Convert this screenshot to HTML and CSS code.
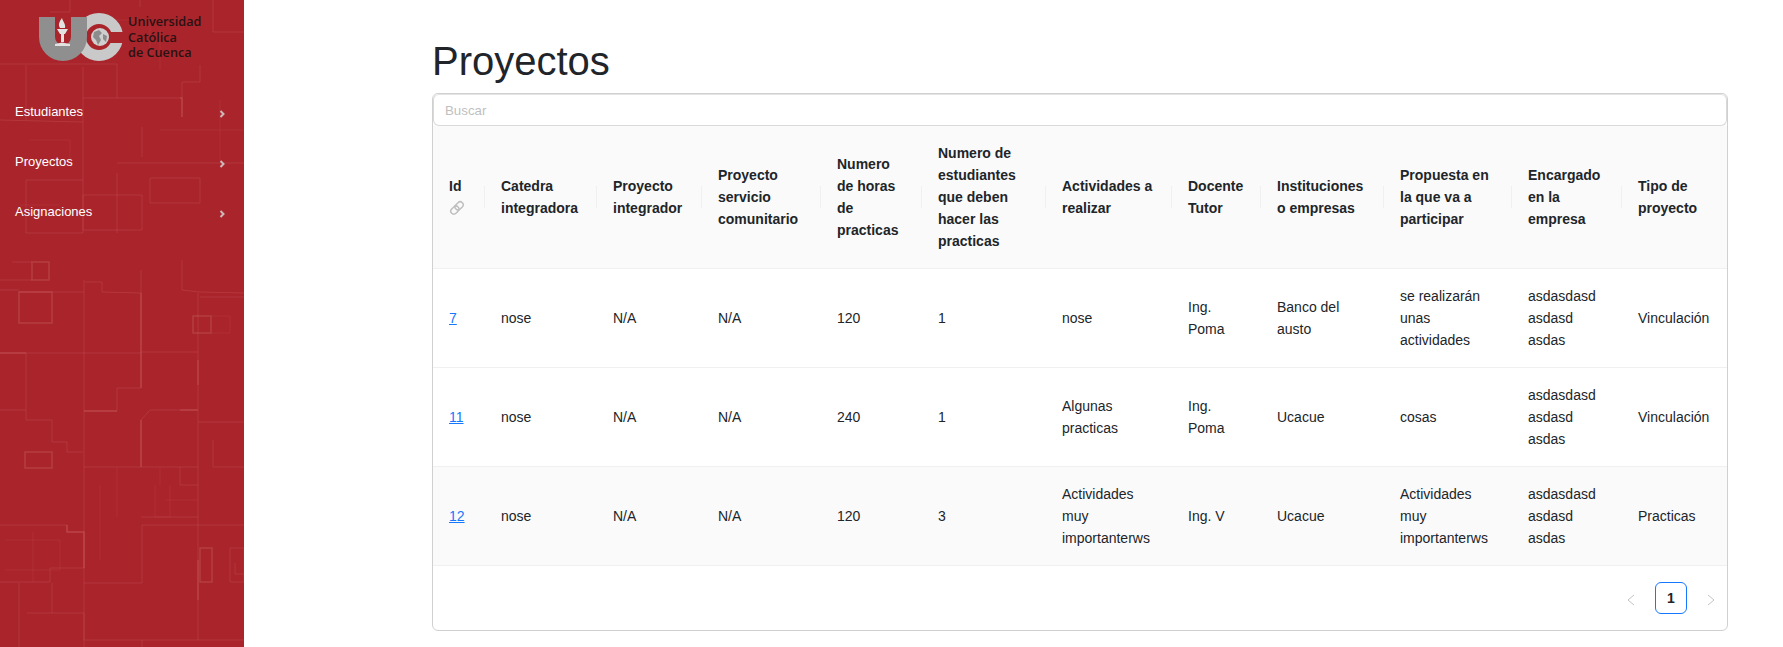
FILE: index.html
```html
<!DOCTYPE html>
<html lang="es">
  <head>
    <meta charset="UTF-8" />
    <meta name="viewport" content="width=device-width, initial-scale=1.0" />
    <title>Proyectos</title>
    <link rel="stylesheet" href="styles.css">
  </head>
  <body>
    <aside class="sidebar">
      <svg class="pattern" viewBox="0 0 244 647" aria-hidden="true">
        <g class="lines">
          <path d="M0 64H117V98M26 65V120M0 120L83 122M83 67V180M83 98H182M182 82V117M200 65V82H182M142 127V157M117 163H244M26 180H83V233H26ZM117 173V233M150 178H200V203H150ZM83 195H142V230H83ZM213 0V32H244M140 0V7M70 0V12H50"/>
          <path d="M0 353H142M84 280V640M141 270V388H117V411H84M0 410H26V420H52V442H67V452H83M26 353V410M198 293V640M142 352H198M141 467V420L150 410H198M84 467H198M141 517H198M198 485H180V467"/>
          <path d="M0 525H67V532H84V568H50V582H0M84 583H142V525H244M19 583V647M52 583V613M27 613H84V647M85 282H102V292L141 293M19 292H84M182 260V290L200 292L244 293"/>
          <path d="M200 297H244M213 440V467H244M198 422H244M235 563V574H244M230 548H244V582H230ZM84 640H244M142 640V647M12 262H32M0 280H32M0 290H19"/>
        </g>
        <g class="lines-bright">
          <rect x="19" y="292" width="33" height="31"/>
          <rect x="32" y="262" width="17" height="18"/>
          <rect x="25" y="452" width="27" height="16"/>
          <rect x="193" y="316" width="18" height="17"/>
          <rect x="200" y="548" width="12" height="34"/>
          <path d="M141 293V388M141 420V467M198 360V385M198 560V600M180 98H182V117M0 353H26M84 411H117M67 525V532H84V568M180 410H198"/>
        </g>
        <g class="lines-faint">
          <path d="M155 485V517H170V485M160 467V485M165 500H198M100 485V560M117 467V517M211 316H230V333H211M5 540H60V570H5M33 532V582M20 205H60M220 100V160M160 130H244M30 140H70V165H30M105 20H150V60M160 30V70"/>
        </g>
      </svg>

      <div class="brand">
        <svg class="brand-logo" viewBox="0 0 85 48" aria-hidden="true">
          <circle class="logo-c" cx="60" cy="24" r="18.5"/>
          <rect class="logo-gap" x="70" y="19" width="15" height="11"/>
          <path class="logo-u" d="M0 4H16V24A8 8 0 0 0 32 24V4H48V24A24 24 0 0 1 0 24Z"/>
          <circle class="logo-globe" cx="61" cy="24" r="9"/>
          <path class="logo-land" d="M55 19L60 17L63 20L60 23L62 27L59 32L57 27L54 24ZM64 21L68 23L67 29L64 26Z"/>
          <path class="logo-flame" d="M23 5C20 9 19 12 21 15H26C27 11 24 9 23 5Z"/>
          <path class="logo-flame" d="M18 16H29L26 21H25L25 29H22L22 21H21ZM16 31L23 29.5L31 31V33H16Z"/>
        </svg>
        <div class="brand-name">Universidad<br>Católica<br>de Cuenca</div>
      </div>

      <nav class="menu">
        <a class="menu-item" href="#">Estudiantes
          <svg class="chevron" viewBox="0 0 6 8"><path d="M1.5 1L4.5 4L1.5 7"/></svg>
        </a>
        <a class="menu-item" href="#">Proyectos
          <svg class="chevron" viewBox="0 0 6 8"><path d="M1.5 1L4.5 4L1.5 7"/></svg>
        </a>
        <a class="menu-item" href="#">Asignaciones
          <svg class="chevron" viewBox="0 0 6 8"><path d="M1.5 1L4.5 4L1.5 7"/></svg>
        </a>
      </nav>
    </aside>

    <main class="content">
      <h1 class="title">Proyectos</h1>
      <section class="card">
        <input class="search" type="text" placeholder="Buscar">
        <table class="projects">
          <colgroup>
            <col class="c-id"><col class="c-cat"><col class="c-int"><col class="c-ser">
            <col class="c-hor"><col class="c-est"><col class="c-act"><col class="c-doc">
            <col class="c-ins"><col class="c-pro"><col class="c-enc"><col class="c-tip">
          </colgroup>
          <thead>
            <tr>
              <th>Id
                <svg class="link-icon" viewBox="0 0 16 16" aria-hidden="true">
                  <g transform="rotate(-45 8 8)">
                    <rect x="0.5" y="5" width="9" height="6" rx="3"/>
                    <rect x="6.5" y="5" width="9" height="6" rx="3"/>
                  </g>
                </svg>
              </th>
              <th>Catedra integradora</th>
              <th>Proyecto integrador</th>
              <th>Proyecto servicio comunitario</th>
              <th>Numero de horas de practicas</th>
              <th>Numero de estudiantes que deben hacer las practicas</th>
              <th>Actividades a realizar</th>
              <th>Docente Tutor</th>
              <th>Instituciones o empresas</th>
              <th>Propuesta en la que va a participar</th>
              <th>Encargado en la empresa</th>
              <th>Tipo de proyecto</th>
            </tr>
          </thead>
          <tbody>
            <tr>
              <td><a href="#">7</a></td>
              <td>nose</td>
              <td>N/A</td>
              <td>N/A</td>
              <td>120</td>
              <td>1</td>
              <td>nose</td>
              <td>Ing. Poma</td>
              <td>Banco del austo</td>
              <td>se realizarán unas actividades</td>
              <td>asdasdasd asdasd asdas</td>
              <td>Vinculación</td>
            </tr>
            <tr>
              <td><a href="#">11</a></td>
              <td>nose</td>
              <td>N/A</td>
              <td>N/A</td>
              <td>240</td>
              <td>1</td>
              <td>Algunas practicas</td>
              <td>Ing. Poma</td>
              <td>Ucacue</td>
              <td>cosas</td>
              <td>asdasdasd asdasd asdas</td>
              <td>Vinculación</td>
            </tr>
            <tr class="striped">
              <td><a href="#">12</a></td>
              <td>nose</td>
              <td>N/A</td>
              <td>N/A</td>
              <td>120</td>
              <td>3</td>
              <td>Actividades muy importanterws</td>
              <td>Ing. V</td>
              <td>Ucacue</td>
              <td>Actividades muy importanterws</td>
              <td>asdasdasd asdasd asdas</td>
              <td>Practicas</td>
            </tr>
          </tbody>
        </table>
        <div class="pager">
          <span class="pager-arrow">
            <svg viewBox="0 0 8 12"><path d="M7 1L1 6L7 11"/></svg>
          </span>
          <span class="pager-page">1</span>
          <span class="pager-arrow">
            <svg viewBox="0 0 8 12"><path d="M1 1L7 6L1 11"/></svg>
          </span>
        </div>
      </section>
    </main>
  </body>
</html>
```

FILE: styles.css
```css
* {
  box-sizing: border-box;
}
body {
  margin: 0;
  height: 100vh;
  display: flex;
  overflow: hidden;
  background: #fff;
  color: #212529;
  font-family: "Liberation Sans", Arial, sans-serif;
  font-size: 14px;
}

/* sidebar */
.sidebar {
  position: relative;
  flex: 0 0 244px;
  background: #a9252b;
}
.pattern {
  position: absolute;
  top: 0;
  left: 0;
  width: 244px;
  height: 647px;
  filter: blur(0.6px);
}
.pattern path,
.pattern rect {
  fill: none;
}
.lines {
  stroke: #c04a50;
  stroke-width: 1;
  stroke-opacity: 0.5;
}
.lines-bright {
  stroke: #c4555a;
  stroke-width: 1.5;
  stroke-opacity: 0.5;
}
.lines-faint {
  stroke: #b8393f;
  stroke-width: 1;
  stroke-opacity: 0.5;
}
.brand {
  position: relative;
  display: flex;
  gap: 4px;
  padding: 13px 0 0 39px;
  height: 86px;
}
.brand-logo {
  width: 85px;
  height: 48px;
  flex: none;
}
.logo-u {
  fill: #8f8f8f;
}
.logo-c {
  fill: none;
  stroke: #c9c9c9;
  stroke-width: 11;
}
.logo-gap {
  fill: #a9252b;
}
.logo-globe {
  fill: #cfcfcf;
}
.logo-land {
  fill: #8c8c8c;
}
.logo-flame {
  fill: #e2e2e2;
}
.brand-name {
  font-family: "Open Sans", sans-serif;
  font-size: 12.7px;
  font-weight: 600;
  line-height: 15.5px;
  color: #2a1214;
  padding-top: 1px;
}
.menu {
  position: relative;
  display: flex;
  flex-direction: column;
}
.menu-item {
  display: flex;
  align-items: center;
  justify-content: space-between;
  height: 50px;
  padding: 0 19px 0 15px;
  color: #fff;
  font-size: 13px;
  text-decoration: none;
}
.chevron {
  width: 6px;
  height: 8px;
  margin-top: 5px;
}
.chevron path {
  fill: none;
  stroke: #cdb9ba;
  stroke-width: 2;
}

/* main column */
.content {
  flex: 1;
  padding: 37px 55px 0 188px;
}
.title {
  margin: 0 0 8px;
  font-size: 40px;
  font-weight: 400;
  line-height: 48px;
}
.card {
  border: 1px solid #d0d0d0;
  border-radius: 6px;
}
.search {
  display: block;
  width: 100%;
  height: 32px;
  padding: 0 11px;
  border: 1px solid #d9d9d9;
  border-top-color: #e4e4e4;
  border-radius: 6px;
  outline: none;
  font-family: inherit;
  font-size: 13.3px;
}
.search::placeholder {
  color: #bfbfbf;
}

/* table */
.projects {
  width: 100%;
  table-layout: fixed;
  border-collapse: separate;
  border-spacing: 0;
  line-height: 22px;
}
.c-id { width: 52px; }
.c-cat { width: 112px; }
.c-int { width: 105px; }
.c-ser { width: 119px; }
.c-hor { width: 101px; }
.c-est { width: 124px; }
.c-act { width: 126px; }
.c-doc { width: 89px; }
.c-ins { width: 123px; }
.c-pro { width: 128px; }
.c-enc { width: 110px; }
.c-tip { width: 105px; }
.projects th,
.projects td {
  padding: 16px;
  border-bottom: 1px solid #f0f0f0;
  text-align: left;
  vertical-align: middle;
}
.projects th {
  position: relative;
  background: #fafafa;
  font-weight: 700;
}
.projects th:not(:last-child)::before {
  content: "";
  position: absolute;
  top: 50%;
  right: 0;
  width: 1px;
  height: 22px;
  margin-top: -11px;
  background: #f0f0f0;
}
.striped td {
  background: #fafafa;
}
.projects a {
  color: #1677ff;
}
.link-icon {
  display: block;
  width: 16px;
  height: 16px;
  margin: 3px 0;
  fill: none;
  stroke: #bfbfbf;
  stroke-width: 1.5;
}

/* pagination */
.pager {
  display: flex;
  justify-content: flex-end;
  gap: 8px;
  padding: 16px 0;
}
.pager-arrow,
.pager-page {
  display: flex;
  align-items: center;
  justify-content: center;
  width: 32px;
  height: 32px;
}
.pager-arrow svg {
  width: 8px;
  height: 12px;
  margin-top: 3px;
}
.pager-arrow path {
  fill: none;
  stroke: #c4c4c4;
  stroke-width: 1;
}
.pager-page {
  border: 1px solid #1677ff;
  border-radius: 6px;
  font-weight: 700;
  color: #212529;
}
```
